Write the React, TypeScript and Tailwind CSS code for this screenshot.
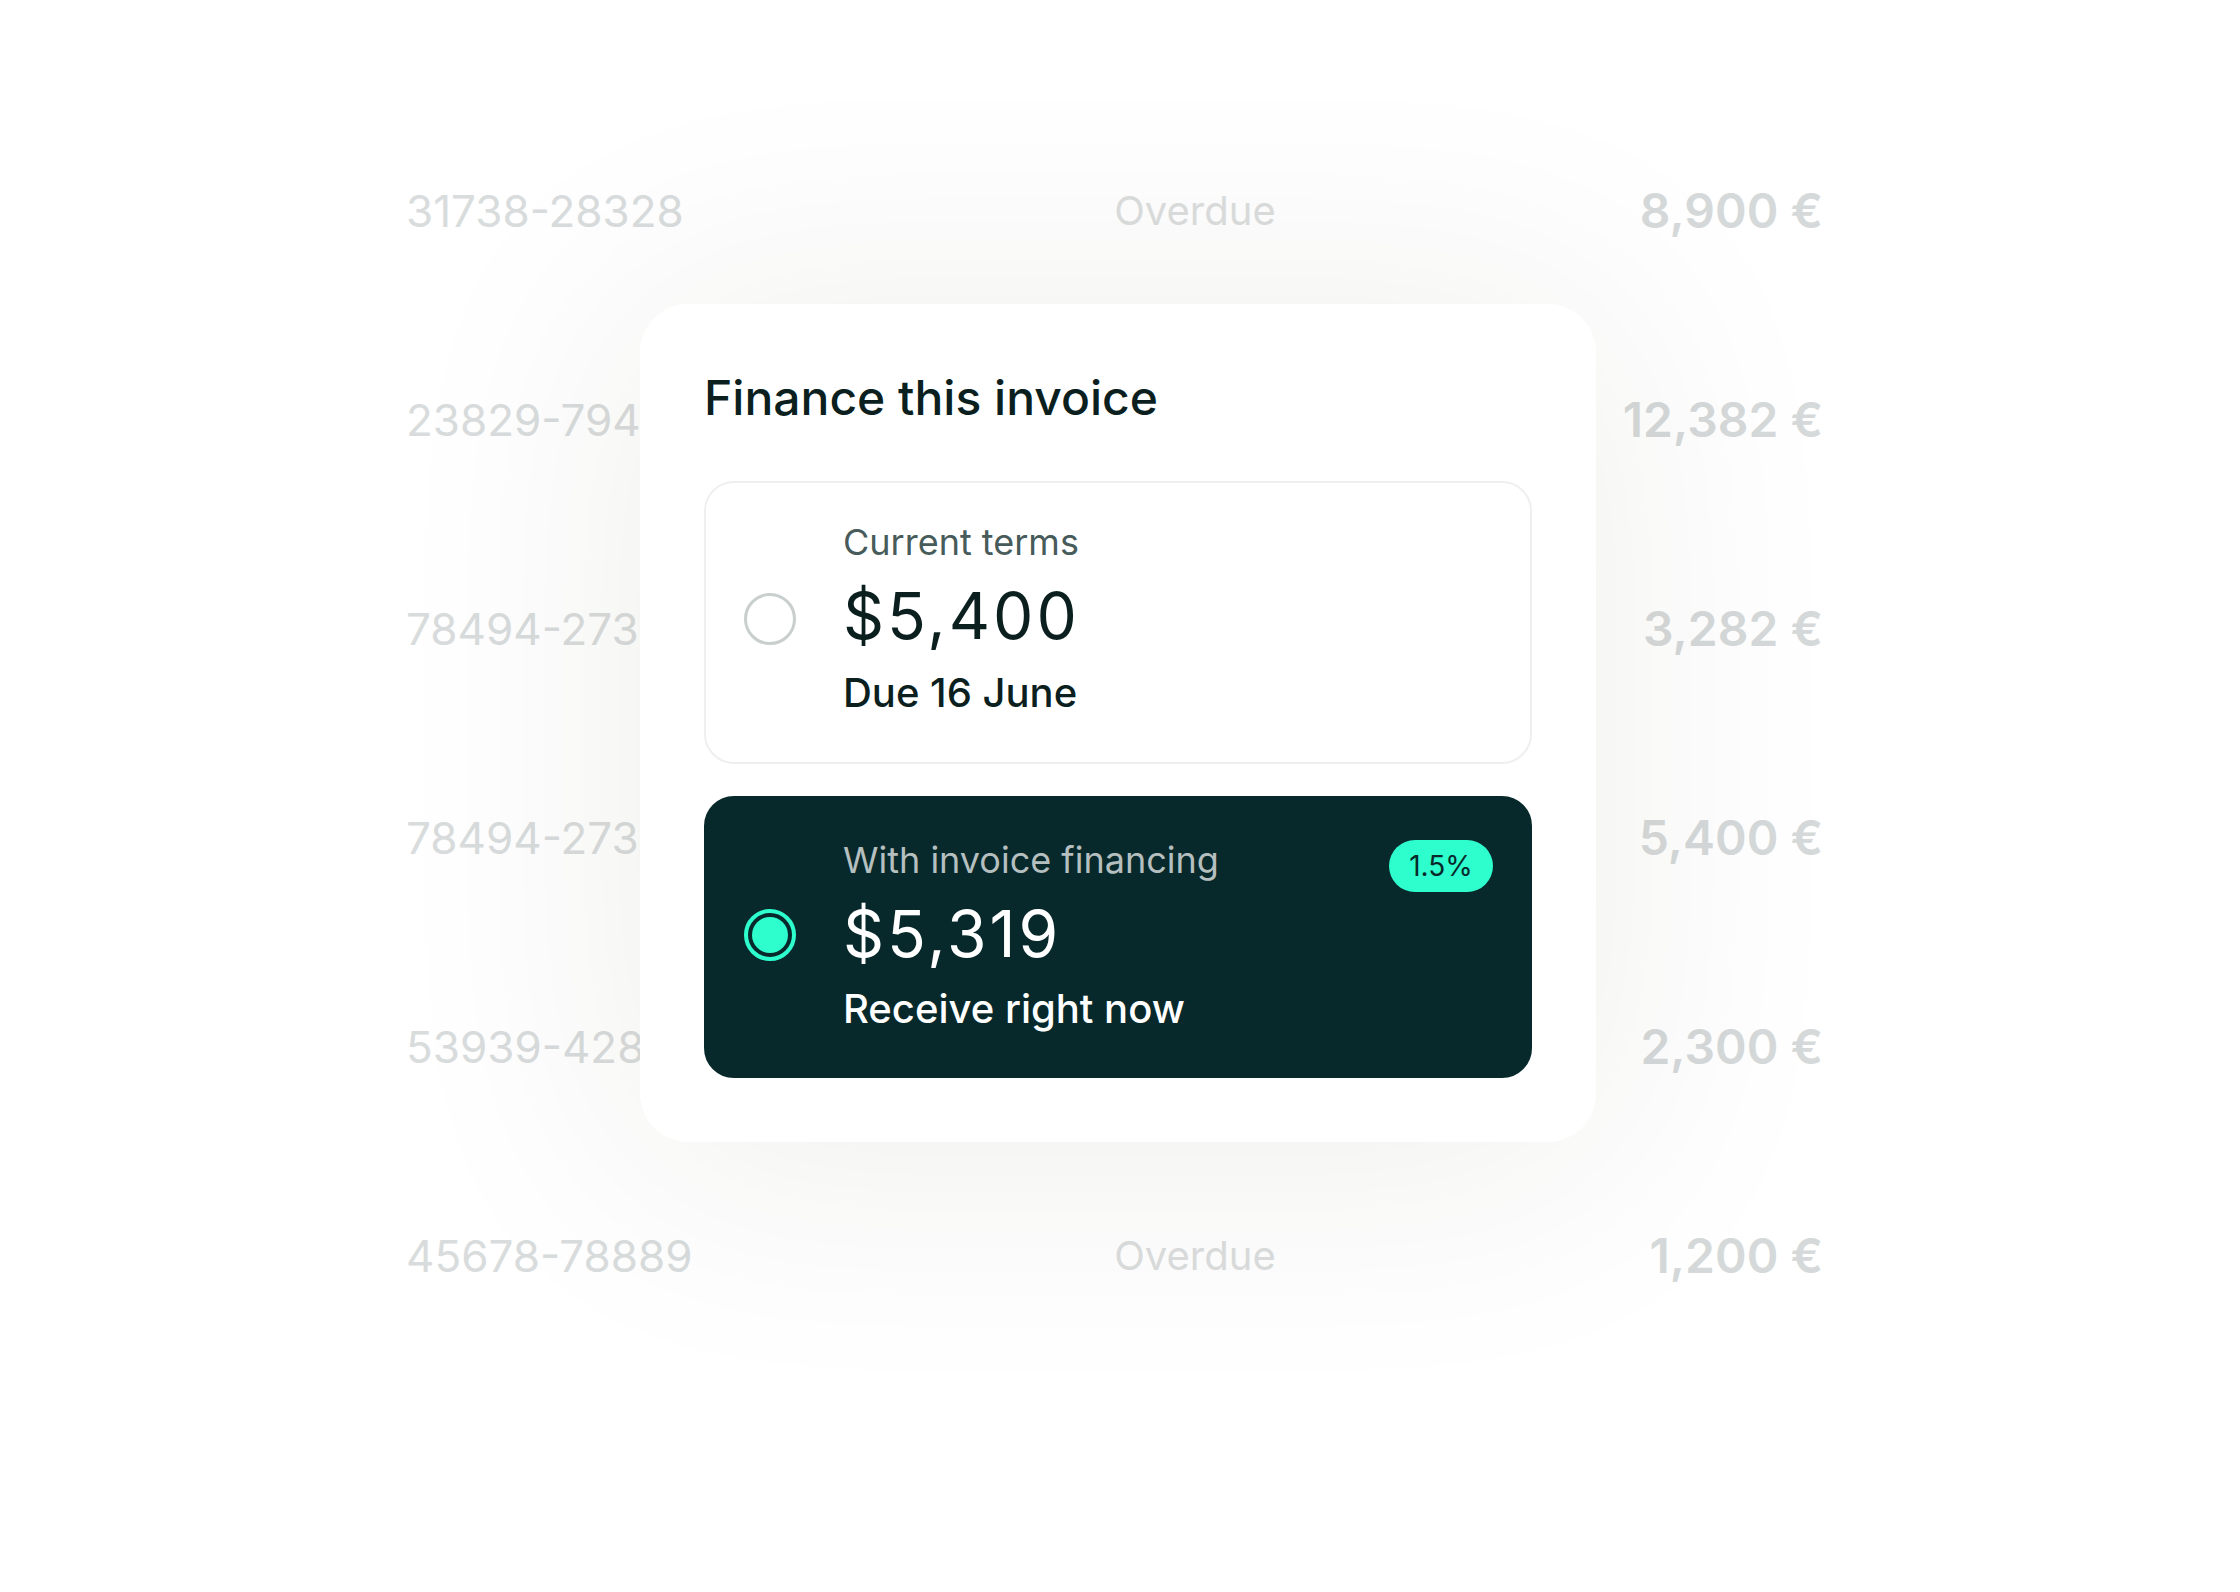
import React from "react";

const rows = [
  { id: "31738-28328", status: "Overdue", amount: "8,900 €" },
  { id: "23829-79482", status: "", amount: "12,382 €" },
  { id: "78494-27311", status: "", amount: "3,282 €" },
  { id: "78494-27318", status: "", amount: "5,400 €" },
  { id: "53939-42817", status: "", amount: "2,300 €" },
  { id: "45678-78889", status: "Overdue", amount: "1,200 €" },
];

function Radio({ checked }: { checked: boolean }) {
  if (checked) {
    return (
      <div className="flex h-[52px] w-[52px] shrink-0 items-center justify-center rounded-full border-[4px] border-[#2efdcd]">
        <div className="h-[36px] w-[36px] rounded-full bg-[#2efdcd]" />
      </div>
    );
  }
  return <div className="h-[52px] w-[52px] shrink-0 rounded-full border-[3px] border-[#c9cfce]" />;
}

export default function App() {
  return (
    <div className="relative h-[1592px] w-[2240px] overflow-hidden bg-white font-['Inter',sans-serif]">
      {/* background invoice table */}
      <div className="w-[1823px] pl-[406px] pt-[106px]">
        {rows.map((r) => (
          <div key={r.id} className="grid h-[209px] grid-cols-[674px_230px_1fr] items-center">
            <span className="text-[44px] leading-none text-[#d9dcdc]">{r.id}</span>
            {r.status ? (
              <span className="justify-self-center px-[28px] py-[18px] text-[40px] leading-none text-[#dcdede]">
                {r.status}
              </span>
            ) : (
              <span />
            )}
            <span className="justify-self-end text-[48px] font-semibold leading-none text-[#d6d9d9]">
              {r.amount}
            </span>
          </div>
        ))}
      </div>

      {/* finance card */}
      <div className="absolute left-[640px] top-[304px] w-[956px] rounded-[48px] bg-white px-[64px] py-[64px] shadow-[0_12px_340px_20px_rgba(40,40,20,0.07)]">
        <h2 className="text-[48px] font-medium leading-[60px] text-[#0b1f1f]">
          Finance this invoice
        </h2>

        <div className="mt-[53px] flex items-start rounded-[30px] border-2 border-[#eeefef] pb-[47px] pl-[38px] pt-[37px]">
          <div className="mt-[73px]">
            <Radio checked={false} />
          </div>
          <div className="ml-[47px] flex flex-col">
            <span className="text-[36px] leading-[44px] text-[#475b5a]">Current terms</span>
            <span className="mt-[16px] text-[64px] leading-[72px] tracking-[3px] text-[#0b1f1f]">$5,400</span>
            <span className="mt-[19px] text-[40px] font-medium leading-[44px] text-[#0b1f1f]">Due 16 June</span>
          </div>
        </div>

        <div className="mt-[32px] flex items-start rounded-[30px] border-2 border-[#08292b] bg-[#08292b] pb-[45px] pl-[38px] pr-[37px] pt-[40px]">
          <div className="mt-[71px]">
            <Radio checked />
          </div>
          <div className="ml-[47px] flex flex-1 flex-col">
            <span className="text-[36px] leading-[44px] text-[#b5bfbf]">With invoice financing</span>
            <span className="mt-[16px] text-[64px] leading-[72px] tracking-[3px] text-white">$5,319</span>
            <span className="mt-[17px] text-[40px] font-medium leading-[44px] text-white">Receive right now</span>
          </div>
          <span className="mt-[2px] flex h-[52px] w-[104px] items-center justify-center rounded-full bg-[#2efdcd] text-[28px] leading-none text-[#08292b]">
            1.5%
          </span>
        </div>
      </div>
    </div>
  );
}
